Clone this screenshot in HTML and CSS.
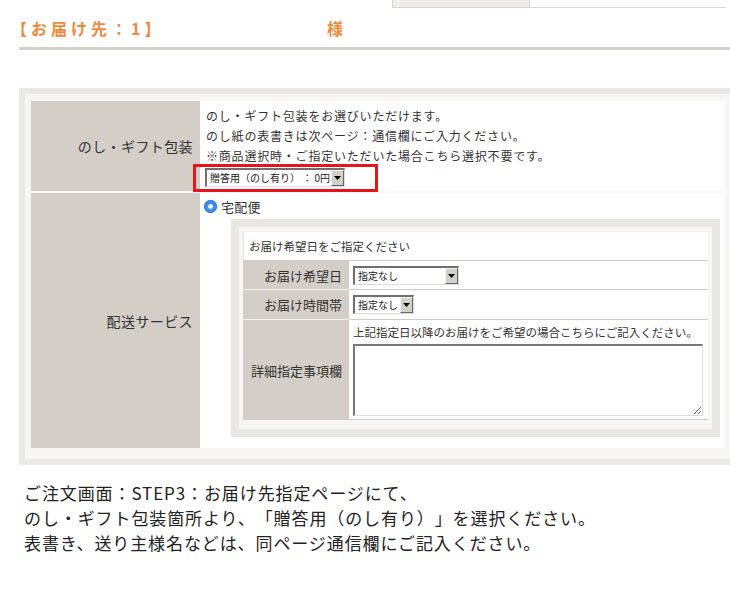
FILE: index.html
```html
<!DOCTYPE html>
<html lang="ja">
<head>
    <meta charset="UTF-8">
    <meta name="viewport" content="width=device-width, initial-scale=1.0">
    <title>お届け先指定</title>
    <link rel="stylesheet" href="styles.css">
</head>
<body>
    <div class="topstrip"><span class="tbox"></span><span class="tline"></span></div>

    <div class="dest">
        <span class="dest-label">【お届け先：1】</span><span class="dest-name">様</span>
    </div>

    <div class="panel">
        <div class="form">
            <div class="label">のし・ギフト包装</div>
            <div class="cell gift">
                <p>のし・ギフト包装をお選びいただけます。</p>
                <p>のし紙の表書きは次ページ：通信欄にご入力ください。</p>
                <p>※商品選択時・ご指定いただいた場合こちら選択不要です。</p>
                <div class="select sel-gift"><span class="val">贈答用（のし有り） ： 0円</span><span class="arrow"><svg width="7" height="4" viewBox="0 0 7 4"><path d="M0 0h7L3.5 4z" fill="#000"/></svg></span></div>
                <div class="mark"></div>
            </div>

            <div class="label">配送サービス</div>
            <div class="cell ship">
                <div class="radio-row"><span class="radio"></span>宅配便</div>
                <div class="delivery">
                    <div class="dtable">
                        <div class="dhead">お届け希望日をご指定ください</div>
                        <div class="dlabel">お届け希望日</div>
                        <div class="dcell"><div class="select sel-date"><span class="val">指定なし</span><span class="arrow"><svg width="7" height="4" viewBox="0 0 7 4"><path d="M0 0h7L3.5 4z" fill="#000"/></svg></span></div></div>
                        <div class="dlabel">お届け時間帯</div>
                        <div class="dcell"><div class="select sel-time"><span class="val">指定なし</span><span class="arrow"><svg width="7" height="4" viewBox="0 0 7 4"><path d="M0 0h7L3.5 4z" fill="#000"/></svg></span></div></div>
                        <div class="dlabel tall">詳細指定事項欄</div>
                        <div class="dcell tall">
                            <p class="hint">上記指定日以降のお届けをご希望の場合こちらにご記入ください。</p>
                            <textarea class="memo"></textarea>
                        </div>
                    </div>
                </div>
            </div>
        </div>
    </div>

    <div class="note">
        <p>ご注文画面：STEP3：お届け先指定ページにて、</p>
        <p>のし・ギフト包装箇所より、「贈答用（のし有り）」を選択ください。</p>
        <p>表書き、送り主様名などは、同ページ通信欄にご記入ください。</p>
    </div>
</body>
</html>
```

FILE: styles.css
```css
body { margin: 0; background: #fff; color: #333; font-family: "Noto Sans CJK JP", "Noto Sans", sans-serif; text-spacing-trim: space-all; }
p { margin: 0; }

.topstrip { display: flex; height: 8px; padding-left: 392px; }
.tbox { width: 136px; height: 7px; background: #efeeea; border: 1px solid #d6d4d0; border-top: none; }
.tline { width: 196px; height: 7px; border-bottom: 1px solid #d9d7d3; }

.dest { margin-left: 19px; height: 39px; border-bottom: 3px solid #d4d1cc; display: flex; align-items: center; color: #ef8a3d; font-weight: bold; font-size: 16px; letter-spacing: 4px; }
.dest-label { width: 316px; margin-left: -8px; }

.panel { margin: 38px 0 0 19px; border: 6px solid #ebe9e5; border-right: none; background: #f8f6f2; padding: 7px 6px 11px 6px; }
.form { display: grid; grid-template-columns: 169px 1fr; grid-template-rows: 90px 255px; row-gap: 2px; }
.label { background: #d3cfc8; display: flex; align-items: center; justify-content: flex-end; padding-right: 7px; font-size: 14px; letter-spacing: 0.4px; }
.cell { background: #fff; position: relative; }

.gift { padding: 5px 0 0 6px; font-size: 12px; line-height: 20px; letter-spacing: 0.8px; }
.mark { position: absolute; left: -7px; top: 63px; width: 179px; height: 22px; border: 3px solid #e8131b; }

.select { display: flex; height: 19px; box-sizing: border-box; border-top: 2px solid #6f6f6f; border-left: 2px solid #6f6f6f; border-right: 1px solid #dcdcdc; border-bottom: 1px solid #dcdcdc; background: #fff; font-size: 10px; line-height: 16px; letter-spacing: 0; }
.select .val { flex: 1; padding-left: 3px; color: #222; white-space: nowrap; overflow: hidden; }
.select .arrow { width: 13px; display: flex; align-items: center; justify-content: center; background: #d4d0c8; border-top: 1px solid #f4f4f4; border-left: 1px solid #f4f4f4; border-right: 1px solid #666; border-bottom: 1px solid #666; box-sizing: border-box; }
.sel-gift { width: 140px; margin: 2px 0 0 -1px; }
.sel-date { width: 106px; }
.sel-time { width: 61px; }

.ship { padding-top: 5px; }
.radio-row { display: flex; align-items: center; height: 16px; padding-left: 4px; font-size: 13px; letter-spacing: 0.3px; }
.radio { width: 13px; height: 13px; border-radius: 50%; background: radial-gradient(circle, #fff 0 2px, #3d8df5 2.6px); margin-right: 4px; box-shadow: inset 0 0 0 1px #2f7be6; }

.delivery { margin: 5px 5px 0 31px; border: 8px solid #e9e7e3; background: #f8f6f2; padding: 5px 4px 9px 4px; }
.dtable { display: grid; grid-template-columns: 106px 1fr; grid-template-rows: 29px 29px 30px 100px; }
.dhead { grid-column: 1 / 3; background: #fff; border-left: 1px solid #e4e2de; border-bottom: 1px solid #cfcdc9; padding-left: 5px; font-size: 11.5px; line-height: 28px; }
.dlabel { background: #d3cfc8; border-bottom: 1px solid #f2f0ec; display: flex; align-items: center; justify-content: flex-end; padding-right: 7px; font-size: 13px; }
.dcell { background: #fff; border-bottom: 1px solid #cfcdc9; display: flex; align-items: center; padding-left: 4px; }
.dlabel.tall { border-bottom: none; }
.dcell.tall { flex-direction: column; align-items: flex-start; padding: 2px 5px 0 4px; }
.hint { font-size: 11.5px; line-height: 20px; }
.memo { width: 350px; height: 72px; box-sizing: border-box; margin: 2px 0 0 0; border-top: 2px solid #777; border-left: 2px solid #777; border-right: 1px solid #ddd; border-bottom: 1px solid #ddd; padding: 2px; }

.note { margin: 15px 0 0 24px; color: #222; font-size: 17px; line-height: 25px; letter-spacing: 0.9px; }
```
